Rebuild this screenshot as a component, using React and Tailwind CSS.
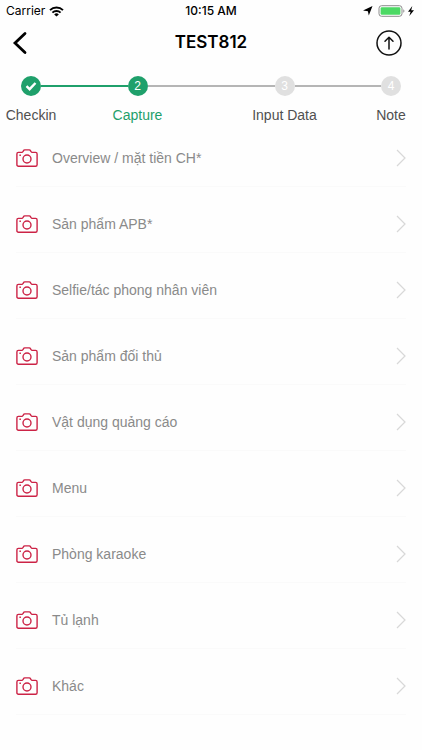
const steps = [
  { name: "Checkin", status: "done", left: "bg-transparent", right: "bg-[#1fa06b]" },
  { name: "Capture", status: "current", left: "bg-[#1fa06b]", right: "bg-[#b5b5b5]" },
  { name: "Input Data", status: "todo", left: "bg-[#b5b5b5]", right: "bg-[#b5b5b5]" },
  { name: "Note", status: "todo", left: "bg-[#b5b5b5]", right: "bg-transparent" },
];

const categories = [
  "Overview / mặt tiền CH*",
  "Sản phẩm APB*",
  "Selfie/tác phong nhân viên",
  "Sản phẩm đối thủ",
  "Vật dụng quảng cáo",
  "Menu",
  "Phòng karaoke",
  "Tủ lạnh",
  "Khác",
];

function WifiIcon() {
  return (
    <svg className="w-[15px] h-[11px]" viewBox="0 0 15 11" aria-hidden="true">
      <g fill="none" stroke="#000" strokeWidth="1.9">
        <path d="M1 4.1a9.3 9.3 0 0 1 13 0" />
        <path d="M3.4 6.6a5.9 5.9 0 0 1 8.2 0" />
      </g>
      <path d="M7.5 10.6 5.2 8.4a3.3 3.3 0 0 1 4.6 0z" />
    </svg>
  );
}

function StatusIcons() {
  return (
    <svg className="w-[54px] h-3" viewBox="0 0 54 12" aria-hidden="true">
      <path d="M10.5 1 6.8 10.6 5.9 6.2 1 5.4z" />
      <rect x="17" y="0.7" width="23" height="10.6" rx="2.6" fill="none" stroke="#8c8c8c" />
      <rect x="18.6" y="2.3" width="19.8" height="7.4" rx="1.2" fill="#4cd964" />
      <path d="M41.3 4.2a2 2 0 0 1 0 3.6z" fill="#8c8c8c" />
      <path d="M50.3 1 46 6.8h2.6L47.3 11 52 5.2h-2.8z" />
    </svg>
  );
}

function CameraIcon() {
  return (
    <svg
      className="w-[22px] h-[18px]"
      viewBox="0 0 22 18"
      fill="none"
      stroke="#cc2346"
      strokeWidth="1.4"
      strokeLinejoin="round"
      aria-hidden="true"
    >
      <path d="M2.4 3.4h3.300c.7 0 1-.3 1.300-.9l.4-.6c.3-.7.7-1 1.400-1h4.400c.7 0 1.100.3 1.400 1l.4.6c.3.6.6.9 1.300.9h3.300c.9 0 1.500.6 1.500 1.500v10.800c0 .9-.6 1.500-1.500 1.500H2.400c-.9 0-1.500-.6-1.500-1.500V4.900c0-.9.6-1.500 1.500-1.500z" />
      <circle cx="11" cy="10" r="4" />
      <path d="M3.400 6.200h1.500" />
    </svg>
  );
}

function StepCircle({ status, number }) {
  if (status === "done") {
    return (
      <span className="flex items-center justify-center size-5 rounded-full bg-[#1fa06b]">
        <svg className="size-3" viewBox="0 0 12 12" fill="none" stroke="#fff" strokeWidth="2.4" aria-hidden="true">
          <path d="M1.500 6.200 4.600 9.200 10.500 3" />
        </svg>
      </span>
    );
  }
  return (
    <span
      className={`flex items-center justify-center size-5 rounded-full text-white text-xs ${
        status === "current" ? "bg-[#1fa06b]" : "bg-[#e0e0e0]"
      }`}
    >
      {number}
    </span>
  );
}

export default function App() {
  return (
    <div className="min-h-screen bg-[#fefefe] font-['Liberation_Sans',Arial,sans-serif]">
      <div className="grid grid-cols-3 items-center h-[22px] px-[6px] font-['Inter',sans-serif] text-xs text-black">
        <div className="flex items-center gap-1">
          <span>Carrier</span>
          <WifiIcon />
        </div>
        <span className="text-center font-medium">10:15 AM</span>
        <div className="flex justify-end">
          <StatusIcons />
        </div>
      </div>

      <header className="grid grid-cols-3 items-center h-[42px] px-3">
        <button type="button" aria-label="Back" className="justify-self-start">
          <svg className="w-4 h-6" viewBox="0 0 16 24" fill="none" stroke="#000" strokeWidth="2.800" aria-hidden="true">
            <path d="M13 2.500 3 12l10 9.500" strokeLinecap="round" />
          </svg>
        </button>
        <h1 className="text-center font-['Inter',sans-serif] text-[17px] font-semibold text-black">TEST812</h1>
        <button type="button" aria-label="Upload" className="justify-self-end mr-2">
          <svg className="size-[26px]" viewBox="0 0 26 26" fill="none" stroke="#111" strokeWidth="1.500" aria-hidden="true">
            <circle cx="13" cy="13" r="12" />
            <path d="M13 19V7.500M9 11.300l4-4 4 4" strokeLinecap="round" strokeLinejoin="round" />
          </svg>
        </button>
      </header>

      <ol className="grid grid-cols-[62px_1fr_1fr_62px] gap-1 pt-3">
        {steps.map((step, i) => (
          <li key={step.name} className="flex flex-col gap-[9px]">
            <div className="flex items-center">
              <span className={`flex-1 h-[2px] -ml-0.5 ${step.left}`} />
              <StepCircle status={step.status} number={i + 1} />
              <span className={`flex-1 h-[2px] -mr-0.5 ${step.right}`} />
            </div>
            <span
              className={`text-center text-sm leading-5 ${
                step.status === "current" ? "text-[#1fa06b]" : "text-[#505050]"
              }`}
            >
              {step.name}
            </span>
          </li>
        ))}
      </ol>

      <ul className="-mt-1 px-4">
        {categories.map((name) => (
          <li key={name} className="border-b border-[#fafafa]">
            <button type="button" className="flex items-center w-full pt-[25px] pb-4 text-left">
              <CameraIcon />
              <span className="flex-1 pl-[14px] text-sm leading-6 text-[#8a8a8a]">{name}</span>
              <svg className="w-[10px] h-[18px]" viewBox="0 0 10 18" fill="none" stroke="#d8d8d8" strokeWidth="1.200" aria-hidden="true">
                <path d="M1 1l8 8-8 8" />
              </svg>
            </button>
          </li>
        ))}
      </ul>
    </div>
  );
}
